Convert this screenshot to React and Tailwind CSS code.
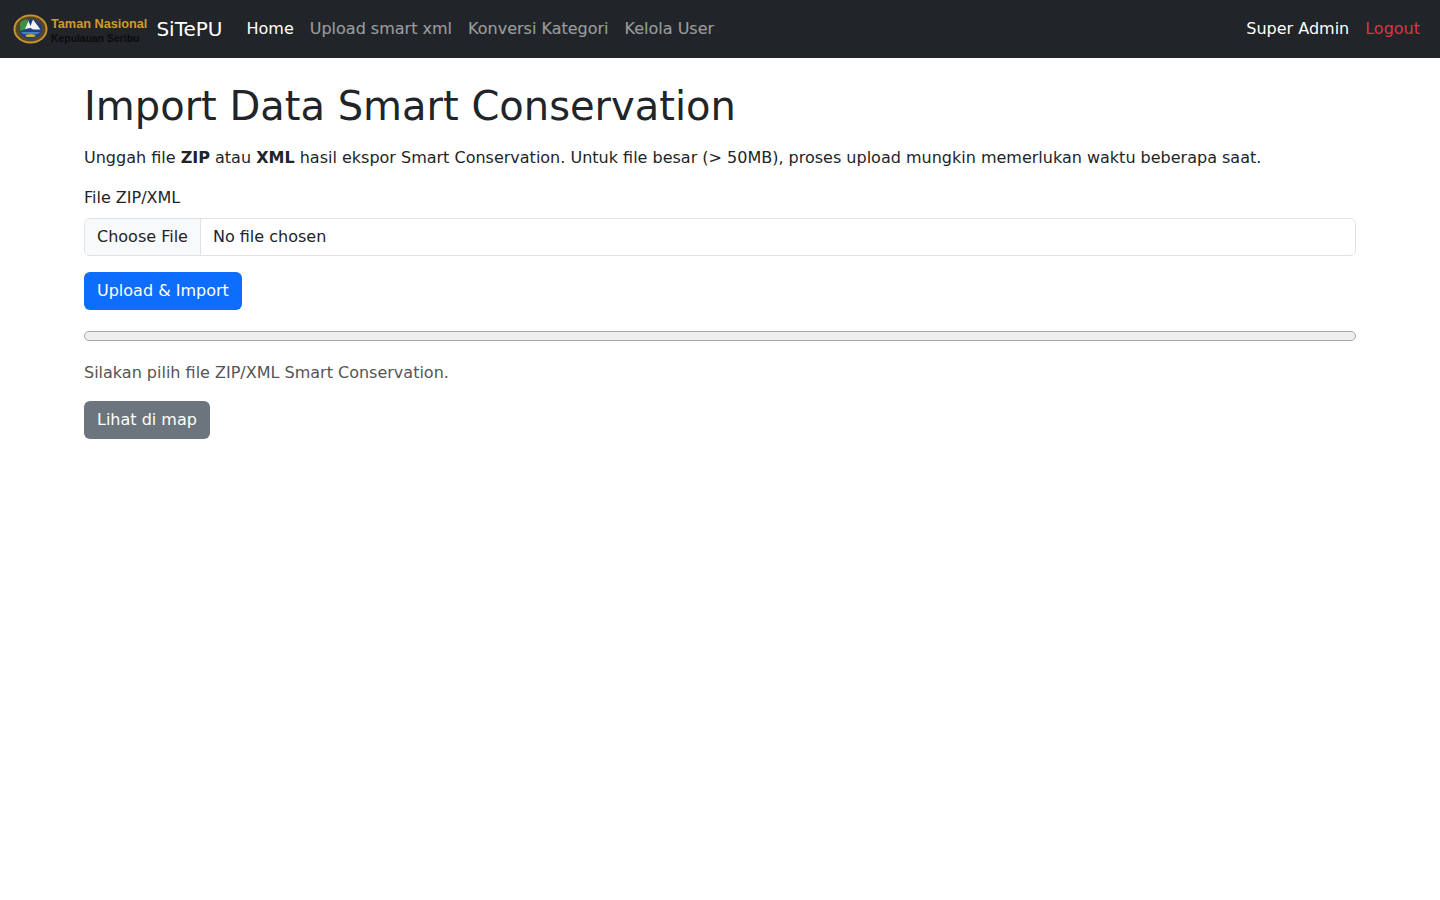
import React from 'react'

const sans = "font-['DejaVu_Sans',sans-serif]"

function Logo() {
  return (
    <div className="flex items-center w-[135.4px] h-[40px] shrink-0 ml-[1px]">
      <svg width="35" height="30" viewBox="0 0 35 30" className="shrink-0">
        <ellipse cx="17.5" cy="15" rx="17" ry="14.5" fill="#c99a35" />
        <ellipse cx="17.5" cy="15" rx="15.2" ry="12.8" fill="#5b4520" />
        <ellipse cx="17.5" cy="15" rx="15.2" ry="12.8" fill="none" stroke="#a9852f" strokeWidth="1" strokeDasharray="1.5 1.5" />
        <ellipse cx="17.5" cy="15" rx="11.5" ry="10" fill="#1f3f86" />
        <path d="M7 9 Q11 4 16 6 L14 15 L7 17 Z" fill="#3d8f4a" />
        <path d="M12 15 L15.5 7 L17.5 12 L20 5.5 L27.5 15.5 L20 15.5 L17.5 14 Z" fill="#f4f5f2" />
        <path d="M8 18 H27 L25 20 H10 Z" fill="#4c7fc0" />
        <ellipse cx="17.5" cy="21.5" rx="5" ry="1.5" fill="#c9b13a" />
      </svg>
      <div className="flex flex-col ml-[3px] pt-[4px] font-['Liberation_Sans',sans-serif] font-bold whitespace-nowrap">
        <span className="text-[12.7px] leading-[14px] text-[#d09a2c]">Taman Nasional</span>
        <span className="text-[10.4px] leading-[13px] mt-[0.5px] text-[#0b0b0b]">Kepulauan Seribu</span>
      </div>
    </div>
  )
}

function NavBar() {
  return (
    <nav className="h-[58px] bg-[#212529] flex items-center px-[12px]">
      <Logo />
      <span className="ml-[8px] text-[20px] leading-[30px] text-white">SiTePU</span>
      <div className="flex items-center ml-[16px] text-[16px] leading-[24px]">
        <a className="px-[8px] text-white">Home</a>
        <a className="px-[8px] text-white/55">Upload smart xml</a>
        <a className="px-[8px] text-white/55">Konversi Kategori</a>
        <a className="px-[8px] text-white/55">Kelola User</a>
      </div>
      <div className="ml-auto flex items-center text-[16px] leading-[24px]">
        <span className="px-[8px] text-white">Super Admin</span>
        <a className="px-[8px] text-[#dc3545]">Logout</a>
      </div>
    </nav>
  )
}

export default function App() {
  return (
    <div className={`min-h-screen bg-white text-[#212529] ${sans}`}>
      <NavBar />
      <main className="px-[84px] pt-[24px]">
        <h1 className="text-[40px] leading-[48px] font-medium mb-[16px]">Import Data Smart Conservation</h1>
        <p className="text-[16px] leading-[24px] mb-[16px]">
          Unggah file <b>ZIP</b> atau <b>XML</b> hasil ekspor Smart Conservation. Untuk file besar (&gt; 50MB), proses upload mungkin memerlukan waktu beberapa saat.
        </p>
        <label className="block text-[16px] leading-[24px] mb-[8px]">File ZIP/XML</label>
        <div className="flex h-[38px] border border-[#dee2e6] rounded-[6px] overflow-hidden mb-[16px]">
          <span className="flex items-center px-[12px] bg-[#f8f9fa] border-r border-[#dee2e6]">Choose File</span>
          <span className="flex items-center px-[12px]">No file chosen</span>
        </div>
        <button className="block h-[38px] px-[13px] rounded-[6px] bg-[#0d6efd] text-white">Upload &amp; Import</button>
        <div className="mt-[21px] h-[10px] rounded-[5px] border border-[#a9a9a9] bg-[#efefef]"></div>
        <p className="mt-[20px] leading-[24px] text-[#555555]">Silakan pilih file ZIP/XML Smart Conservation.</p>
        <button className="block mt-[16px] h-[38px] px-[13px] rounded-[6px] bg-[#6c757d] text-white">Lihat di map</button>
      </main>
    </div>
  )
}
